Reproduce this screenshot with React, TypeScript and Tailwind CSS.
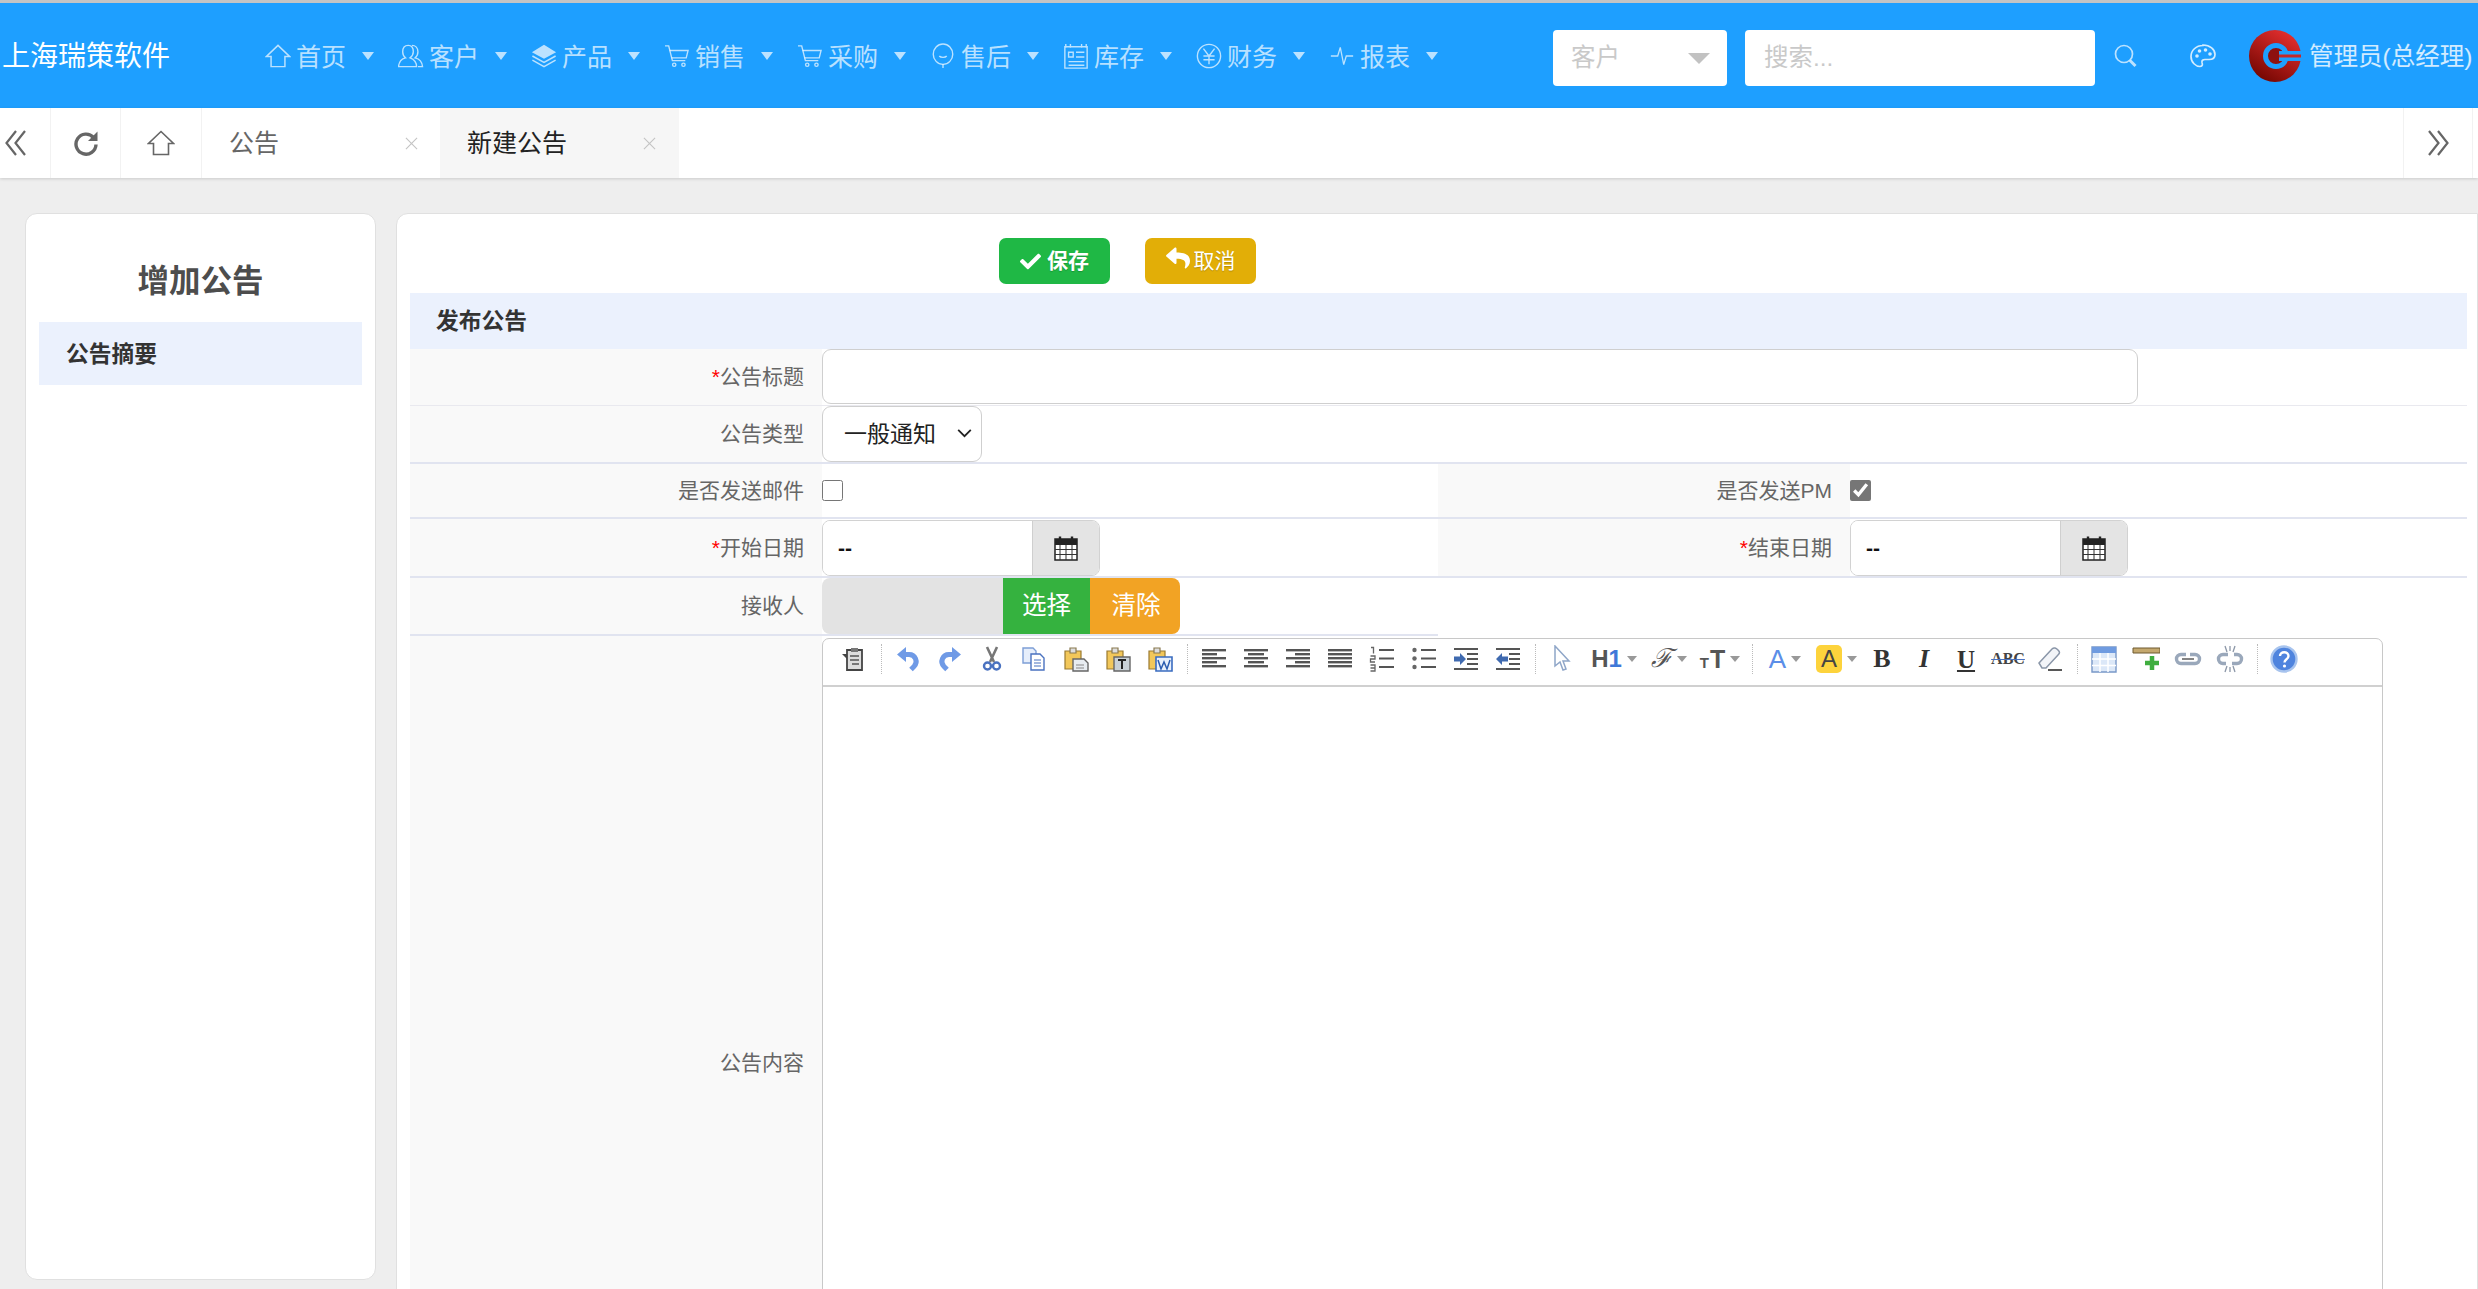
import type { ReactNode } from "react"
import { FaCheck, FaReply } from "react-icons/fa"

const sans = "font-['Liberation_Sans','Noto_Sans_CJK_SC',sans-serif]"

function HomeIcon({ className }: { className?: string }) {
  return (
    <svg viewBox="0 0 28 26" className={className} fill="none" stroke="currentColor" strokeWidth="1.6">
      <path d="M14 1.5 26.5 13.5H21.5V24.5H6.5V13.5H1.5Z" />
    </svg>
  )
}

function UserIcon() {
  return (
    <svg viewBox="0 0 28 26" className="w-[26px] h-[24px]" fill="none" stroke="currentColor" strokeWidth="1.5">
      <path d="M11 1.5c-4 0-6 3-6 7 0 3 1 5 3 6.5-4 1-7 4-7.5 9.5H20c0-5-3-8-7-9.5 2-1.5 3.5-3.5 3.5-6.5 0-4-2-7-5.500-7Z" />
      <path d="M15 1.500c4 0 6.500 3 6.500 7 0 3-1 5-3 6.500 4 1 7.500 4 8 9.500h-5" />
    </svg>
  )
}

function LayersIcon() {
  return (
    <svg viewBox="0 0 28 26" className="w-[26px] h-[26px]" fill="none" stroke="currentColor" strokeWidth="1.6">
      <path d="M14 1 27 9 14 16 1 9Z" fill="currentColor" stroke="none" />
      <path d="M1.500 13 14 20 26.500 13M1.500 17.500 14 24.500 26.500 17.500" />
    </svg>
  )
}

function CartIcon() {
  return (
    <svg viewBox="0 0 28 26" className="w-[26px] h-[24px]" fill="none" stroke="currentColor" strokeWidth="1.5">
      <path d="M1 2h4l4 16h14" />
      <path d="M6 7h20l-2 8H8" />
      <circle cx="11" cy="22.500" r="1.800" />
      <circle cx="21" cy="22.500" r="1.800" />
    </svg>
  )
}

function BalloonIcon() {
  return (
    <svg viewBox="0 0 28 28" className="w-[26px] h-[26px]" fill="none" stroke="currentColor" strokeWidth="1.5">
      <ellipse cx="14" cy="12" rx="10.500" ry="11" />
      <path d="M10 14c1.500 2 6.500 2 8 0M14 23v4" />
    </svg>
  )
}

function NotebookIcon() {
  return (
    <svg viewBox="0 0 28 28" className="w-[26px] h-[26px]" fill="none" stroke="currentColor" strokeWidth="1.5">
      <path d="M2 4h24v23H2ZM3 1v4M8 1v4M20 1v4M25 1v4" />
      <path d="M6 10h5v5H6ZM14 10h9M14 15h9M6 20h17M6 24h17" />
    </svg>
  )
}

function YenIcon() {
  return (
    <svg viewBox="0 0 28 28" className="w-[26px] h-[26px]" fill="none" stroke="currentColor" strokeWidth="1.5">
      <circle cx="14" cy="14" r="12.500" />
      <path d="M8 6l6 8 6-8M8 14h12M8 18h12M14 14v9" />
    </svg>
  )
}

function PulseIcon() {
  return (
    <svg viewBox="0 0 28 26" className="w-[24px] h-[24px]" fill="none" stroke="currentColor" strokeWidth="1.500">
      <path d="M1 13h8l3-10 4 20 3-10h8" />
    </svg>
  )
}

function Avatar() {
  return (
    <svg viewBox="0 0 52 52" className="w-[52px] h-[52px] shrink-0">
      <defs>
        <linearGradient id="av" x1="0.800" y1="0" x2="0.200" y2="1">
          <stop offset="0" stopColor="#e83030" />
          <stop offset="1" stopColor="#6f0500" />
        </linearGradient>
      </defs>
      <circle cx="26" cy="26" r="26" fill="url(#av)" />
      <circle cx="27" cy="26" r="10.500" fill="#8e1010" stroke="#1e9fff" strokeWidth="5" />
      <path d="M30 21h22v10H30Z" fill="#1e9fff" />
      <path d="M30 24.500h22v3H30Z" fill="#c62828" />
    </svg>
  )
}

function DoubleChevron({ left }: { left?: boolean }) {
  return (
    <svg viewBox="0 0 24 26" className="w-[24px] h-[26px]" fill="none" stroke="#666" strokeWidth="2.200">
      <path d={left ? "M12 1 2.500 13 12 25M21 1 11.500 13 21 25" : "M3 1 12.500 13 3 25M12 1 21.500 13 12 25"} />
    </svg>
  )
}

function RefreshIcon() {
  return (
    <svg viewBox="0 0 26 26" className="w-[26px] h-[26px]" fill="none">
      <path d="M20.500 7.500A10 10 0 1 0 23 14.500" stroke="#666" strokeWidth="3.400" />
      <path d="M24.500 1.500V11H15Z" fill="#666" />
    </svg>
  )
}

function TabClose() {
  return (
    <svg viewBox="0 0 14 14" className="w-[13px] h-[13px]" stroke="#c4c4c4" strokeWidth="1.200">
      <path d="M1 1l12 12M13 1 1 13" />
    </svg>
  )
}

function CalendarIcon() {
  return (
    <svg viewBox="0 0 24 26" className="w-[24px] h-[26px]" fill="none">
      <path d="M1 4h22v21H1Z" fill="#fff" stroke="#222" strokeWidth="1.500" />
      <path d="M1 4h22v6H1Z" fill="#222" />
      <path d="M6 1.500v6M18 1.500v6" stroke="#222" strokeWidth="2.400" />
      <path d="M6 10v15M12 10v15M18 10v15M1 14.500h22M1 19.500h22" stroke="#333" strokeWidth="1" />
    </svg>
  )
}

function NavItem({ icon, label }: { icon: ReactNode; label: string }) {
  return (
    <div className="w-[133px] shrink-0 flex items-center text-white/70">
      <div className="w-[26px] flex justify-center">{icon}</div>
      <span className="ml-[5px] pt-[3px] text-[25px] leading-none">{label}</span>
      <span className="ml-[16px] border-x-[6px] border-t-[8px] border-x-transparent border-t-white/70" />
    </div>
  )
}

function Row({ label, star, children, border = "border-b-2 border-[#e1e4f0]" }: { label: string; star?: boolean; children: ReactNode; border?: string }) {
  return (
    <div className={"flex " + border}>
      <RowLabel label={label} star={star} />
      <div className="flex-1 flex items-center">{children}</div>
    </div>
  )
}

function RowLabel({ label, star, className = "w-[412px]" }: { label: string; star?: boolean; className?: string }) {
  return (
    <div className={"shrink-0 bg-[#f9f9f9] flex items-center justify-end pr-[18px] text-[21px] text-[#666] " + className}>
      {star && <span className="text-[#f00]">*</span>}
      {label}
    </div>
  )
}

function DateInput() {
  return (
    <div className="w-[278px] h-[56px] flex border border-[#d2d2d2] rounded-[8px] overflow-hidden">
      <div className="flex-1 bg-white flex items-center pl-[15px] text-[21px] font-bold text-[#111]">--</div>
      <div className="w-[67px] bg-[#e4e4e4] border-l border-[#cfcfcf] flex items-center justify-center">
        <CalendarIcon />
      </div>
    </div>
  )
}

// one toolbar slot, 42px wide unless told otherwise
function Btn({ children, w = "w-[42px]" }: { children: ReactNode; w?: string }) {
  return <div className={"h-[42px] flex items-center justify-center shrink-0 " + w}>{children}</div>
}

function Sep() {
  return (
    <div className="w-[12px] h-[30px] flex justify-center shrink-0">
      <div className="border-l border-dotted border-[#bbb]" />
    </div>
  )
}

function Drop() {
  return <span className="ml-[5px] border-x-[5px] border-t-[6px] border-x-transparent border-t-[#999]" />
}

function Ico({ children }: { children: ReactNode }) {
  return (
    <svg viewBox="0 0 28 28" className="w-[28px] h-[28px]" fill="none">
      {children}
    </svg>
  )
}

function ClipBase() {
  return (
    <>
      <path d="M3 6h16v18H3Z" fill="#f2c75a" stroke="#9a7a30" strokeWidth="1.200" />
      <path d="M8 3h6v5H8Z" fill="#ddd" stroke="#8a7a50" strokeWidth="1.200" />
    </>
  )
}

function Lines({ rows }: { rows: [number, number][] }) {
  return (
    <Ico>
      {rows.map(([x, w], i) => (
        <rect key={i} x={x} y={4 + i * 4} width={w} height="2.400" fill="#555" />
      ))}
    </Ico>
  )
}

function Toolbar() {
  return (
    <div className="h-[48px] pl-[10px] pb-[6px] flex items-center border-b-2 border-[#d0d0d0]">
      <Btn>
        <Ico>
          <path d="M7 5h15v20H7Z" fill="#ddd" stroke="#444" strokeWidth="1.800" />
          <path d="M11 3h7v4h-7Z" fill="#777" />
          <path d="M10 11h9M10 15h9M12 19h7" stroke="#555" strokeWidth="1.400" />
          <path d="M2 9l5 0v5Z" fill="#444" />
        </Ico>
      </Btn>
      <Sep />
      <Btn>
        <Ico>
          <path d="M10 9.500h5a7 7 0 0 1 5 12l-3 3" stroke="#6f9ae6" strokeWidth="5" />
          <path d="M3 9.500 12 2V17Z" fill="#6f9ae6" />
        </Ico>
      </Btn>
      <Btn>
        <Ico>
          <path d="M18 9.500h-5a7 7 0 0 0-5 12l3 3" stroke="#6f9ae6" strokeWidth="5" />
          <path d="M25 9.500 16 2V17Z" fill="#6f9ae6" />
        </Ico>
      </Btn>
      <Btn>
        <Ico>
          <path d="M9 2l7 15M19 2l-7 15" stroke="#777" strokeWidth="2.600" />
          <circle cx="9.500" cy="21" r="3.500" stroke="#4a72c0" strokeWidth="2.400" />
          <circle cx="18.500" cy="21" r="3.500" stroke="#4a72c0" strokeWidth="2.400" />
        </Ico>
      </Btn>
      <Btn>
        <Ico>
          <path d="M3 3h10l3 3v12H3Z" fill="#e6eefb" stroke="#7d9ed6" strokeWidth="1.400" />
          <path d="M11 9h9l4 4v12H11Z" fill="#fff" stroke="#4a72c0" strokeWidth="1.400" />
          <path d="M14 15h7M14 18h7M14 21h7" stroke="#4a72c0" strokeWidth="1.200" />
        </Ico>
      </Btn>
      <Btn>
        <Ico>
          <ClipBase />
          <path d="M11 14h11l4 4v8H11Z" fill="#e8edf2" stroke="#666" strokeWidth="1.400" />
          <path d="M14 20h8M14 23h8" stroke="#888" strokeWidth="1.200" />
        </Ico>
      </Btn>
      <Btn>
        <Ico>
          <ClipBase />
          <path d="M10 12h16v14H10Z" fill="#c8d0d6" stroke="#666" strokeWidth="1.400" />
          <path d="M14 15h8M18 15v9" stroke="#222" strokeWidth="2" />
        </Ico>
      </Btn>
      <Btn>
        <Ico>
          <ClipBase />
          <path d="M10 12h16v14H10Z" fill="#e8f0fc" stroke="#3a6cc0" strokeWidth="1.600" />
          <path d="M12 15l3 9 3-7 3 7 3-9" stroke="#2a5cb0" strokeWidth="1.500" />
        </Ico>
      </Btn>
      <Sep />
      <Btn><Lines rows={[[2, 24], [2, 15], [2, 24], [2, 15], [2, 24]]} /></Btn>
      <Btn><Lines rows={[[2, 24], [6, 16], [2, 24], [6, 16], [2, 24]]} /></Btn>
      <Btn><Lines rows={[[2, 24], [11, 15], [2, 24], [11, 15], [2, 24]]} /></Btn>
      <Btn><Lines rows={[[2, 24], [2, 24], [2, 24], [2, 24], [2, 24]]} /></Btn>
      <Btn>
        <Ico>
          <path d="M11 5h15M11 13.500h15M11 22h15" stroke="#555" strokeWidth="2.200" />
          <path d="M3 2.500h2.500v6M2.500 11h4.500v3h-4.500v3h4.500M2.500 20h4.500v3h-4.500M7 23v3h-4.500" stroke="#666" strokeWidth="1.300" />
        </Ico>
      </Btn>
      <Btn>
        <Ico>
          <path d="M11 5h15M11 13.500h15M11 22h15" stroke="#555" strokeWidth="2.200" />
          <circle cx="4.500" cy="5" r="2.200" fill="#666" />
          <circle cx="4.500" cy="13.500" r="2.200" fill="#666" />
          <circle cx="4.500" cy="22" r="2.200" fill="#666" />
        </Ico>
      </Btn>
      <Btn>
        <Ico>
          <path d="M2 4h24M15 9h11M15 14h11M15 19h11M2 24h24" stroke="#555" strokeWidth="2.200" />
          <path d="M2 11.500h6V8l6 6-6 6v-3.500H2Z" fill="#3f6ab0" />
        </Ico>
      </Btn>
      <Btn>
        <Ico>
          <path d="M2 4h24M15 9h11M15 14h11M15 19h11M2 24h24" stroke="#555" strokeWidth="2.200" />
          <path d="M14 11.500H8V8l-6 6 6 6v-3.500h6Z" fill="#3f6ab0" />
        </Ico>
      </Btn>
      <Sep />
      <Btn>
        <Ico>
          <path d="M7 1v20l5-4 3 8 3-1-3-8h6Z" fill="#fff" stroke="#8fa6c8" strokeWidth="1.500" />
        </Ico>
      </Btn>
      <Btn w="w-[60px]">
        <span className="text-[24px] leading-none font-bold font-['Liberation_Sans',sans-serif] text-[#555] pl-[2px]">H<span className="text-[#3f78d8]">1</span></span>
        <Drop />
      </Btn>
      <Btn w="w-[51px]">
        <span className="text-[26px] leading-none italic font-['Liberation_Serif',serif] text-[#555]">ℱ</span>
        <Drop />
      </Btn>
      <Btn w="w-[52px]">
        <span className="font-['Liberation_Sans',sans-serif] font-bold text-[#555] leading-none"><span className="text-[15px]">T</span><span className="text-[25px] ml-[1px]">T</span></span>
        <Drop />
      </Btn>
      <Sep />
      <Btn w="w-[48px] pl-[6px]">
        <span className="text-[26px] leading-none font-['Liberation_Sans',sans-serif] text-[#5b8ee8]">A</span>
        <Drop />
      </Btn>
      <Btn w="w-[55px] pl-[6px]">
        <span className="w-[26px] h-[28px] rounded-[5px] bg-[#fdd33c] flex items-center justify-center text-[24px] leading-none font-['Liberation_Sans',sans-serif] text-[#444]">A</span>
        <Drop />
      </Btn>
      <Btn><span className="text-[26px] leading-none font-bold font-['Liberation_Serif',serif] text-[#333]">B</span></Btn>
      <Btn><span className="text-[26px] leading-none font-bold italic font-['Liberation_Serif',serif] text-[#333]">I</span></Btn>
      <Btn><span className="text-[25px] leading-none font-bold underline font-['Liberation_Serif',serif] text-[#333]">U</span></Btn>
      <Btn><span className="text-[16px] leading-none font-bold line-through decoration-[#4a72c0] font-['Liberation_Serif',serif] text-[#444]">ABC</span></Btn>
      <Btn>
        <Ico>
          <path d="M3 18 16 4c2-2 4-1 6 1s2 3 0 5L10 23H6Z" fill="#f2f4f8" stroke="#8a96a8" strokeWidth="1.500" />
          <path d="M12 25h14" stroke="#444" strokeWidth="1.800" />
        </Ico>
      </Btn>
      <Sep />
      <Btn>
        <Ico>
          <path d="M2 2h24v25H2Z" fill="#dce8f8" stroke="#7898c8" strokeWidth="1.400" />
          <path d="M2 2h24v6H2Z" fill="#6f9be0" />
          <path d="M10 8v19M18 8v19M2 14h24M2 20.500h24" stroke="#fff" strokeWidth="1.500" />
        </Ico>
      </Btn>
      <Btn>
        <Ico>
          <path d="M1 3h27v5H1Z" fill="#c4a86e" stroke="#6e5a30" strokeWidth="1" />
          <path d="M20 11v14M13 18h14" stroke="#3fae3f" strokeWidth="4.500" />
        </Ico>
      </Btn>
      <Btn>
        <Ico>
          <path d="M12 9.500H7a4.500 4.500 0 0 0 0 9h14a4.500 4.500 0 0 0 0-9h-5" stroke="#9aa8bb" strokeWidth="3.400" />
          <path d="M8 14h12" stroke="#666" strokeWidth="1.600" />
        </Ico>
      </Btn>
      <Btn>
        <Ico>
          <path d="M12 9.500H7a4.500 4.500 0 0 0 0 9h3M16 18.500h5a4.500 4.500 0 0 0 0-9h-3" stroke="#9aa8bb" strokeWidth="3.400" />
          <path d="M9 1l2 6M19 1l-2 6M14 1v5M9 27l2-6M19 27l-2-6M14 27v-5" stroke="#8c97a8" strokeWidth="1.300" />
        </Ico>
      </Btn>
      <Sep />
      <Btn>
        <svg viewBox="0 0 28 28" className="w-[28px] h-[28px]">
          <circle cx="14" cy="14" r="12.500" fill="#4f84de" stroke="#a8c4ee" strokeWidth="2.400" />
          <path d="M10 11c0-5 8.500-5 8.500 0 0 3.500-4 3-4 6.500" fill="none" stroke="#fff" strokeWidth="2.400" />
          <circle cx="14.500" cy="21" r="1.600" fill="#fff" />
        </svg>
      </Btn>
    </div>
  )
}

export default function App() {
  return (
    <div className={"w-full h-[1289px] overflow-hidden bg-[#eeeeee] flex flex-col " + sans}>
      <div className="h-[3px] bg-[#c4c4c4] shrink-0" />
      <header className="h-[105px] shrink-0 bg-[#1e9fff] flex items-center">
        <div className="w-[265px] shrink-0 pl-[2px] pt-[2px] text-[28px] leading-none text-white">上海瑞策软件</div>
        <NavItem icon={<HomeIcon className="w-[26px] h-[24px]" />} label="首页" />
        <NavItem icon={<UserIcon />} label="客户" />
        <NavItem icon={<LayersIcon />} label="产品" />
        <NavItem icon={<CartIcon />} label="销售" />
        <NavItem icon={<CartIcon />} label="采购" />
        <NavItem icon={<BalloonIcon />} label="售后" />
        <NavItem icon={<NotebookIcon />} label="库存" />
        <NavItem icon={<YenIcon />} label="财务" />
        <NavItem icon={<PulseIcon />} label="报表" />
        <div className="ml-[91px] mt-[5px] w-[174px] h-[56px] shrink-0 bg-white rounded-[4px] flex items-center justify-between pl-[18px] pr-[17px]">
          <span className="text-[24.5px] text-[#c9c9c9]">客户</span>
          <span className="border-x-[11px] border-t-[11px] border-x-transparent border-t-[#c2c2c2]" />
        </div>
        <input placeholder="搜索..." className="ml-[18px] mt-[5px] w-[350px] h-[56px] shrink-0 bg-white rounded-[4px] pl-[19px] text-[24.5px] outline-none placeholder:text-[#c9c9c9]" />
        <div className="ml-[19px] w-[24px] shrink-0 text-white/70">
          <svg viewBox="0 0 24 24" className="w-[24px] h-[24px]" fill="none" stroke="currentColor" strokeWidth="1.700">
            <circle cx="10" cy="10" r="8.500" />
            <path d="M16 16.500l5.500 5.500" strokeWidth="3" />
          </svg>
        </div>
        <div className="ml-[52px] w-[24px] shrink-0 text-white/80">
          <svg viewBox="0 0 26 24" className="w-[26px] h-[24px]" fill="none" stroke="currentColor" strokeWidth="1.700">
            <path d="M13 1.500C6 1.500 1 6.500 1 12.500c0 6 5 10 9 10 3 0 2.500-2.500 2-4-.5-2 1-3 3-3h4c4 0 6-2 6-5 0-5-5-9.500-12-9.500Z" />
            <circle cx="7" cy="12" r="1.800" fill="currentColor" stroke="none" />
            <circle cx="9.500" cy="7" r="1.800" fill="currentColor" stroke="none" />
            <circle cx="15.500" cy="6" r="1.800" fill="currentColor" stroke="none" />
            <circle cx="20" cy="10" r="1.800" fill="currentColor" stroke="none" />
          </svg>
        </div>
        <div className="ml-[35px] shrink-0"><Avatar /></div>
        <span className="ml-[8px] pt-[3px] text-[24.5px] leading-none whitespace-nowrap text-white/80">管理员(总经理)</span>
      </header>

      <nav className="h-[70px] shrink-0 bg-white flex shadow-[0_1px_3px_rgba(0,0,0,0.15)] relative">
        <div className="w-[51px] flex items-center pl-[4px] border-r border-[#f2f2f2]"><DoubleChevron left /></div>
        <div className="w-[70px] flex items-center justify-center border-r border-[#f2f2f2]"><RefreshIcon /></div>
        <div className="w-[81px] flex items-center justify-center border-r border-[#f2f2f2] text-[#666]"><HomeIcon className="w-[28px] h-[26px]" /></div>
        <div className="w-[238px] flex items-center justify-between pl-[27px] pr-[22px] pt-[1px] text-[25px] text-[#666]">
          公告
          <TabClose />
        </div>
        <div className="w-[239px] flex items-center justify-between pl-[27px] pr-[23px] pt-[1px] text-[25px] text-[#222] bg-[#f6f6f6]">
          新建公告
          <TabClose />
        </div>
        <div className="flex-1" />
        <div className="w-[70px] flex items-center justify-center border-x border-[#f2f2f2]"><DoubleChevron /></div>
        <div className="w-[5px]" />
      </nav>

      <main className="flex-1 min-h-0 flex gap-[20px] pl-[25px] pt-[35px] overflow-hidden">
        <aside className="w-[351px] h-[1067px] shrink-0 bg-white border border-[#e0e0e0] rounded-[12px] px-[13px]">
          <h2 className="h-[108px] pt-[28px] flex items-center justify-center text-[31.5px] font-bold text-[#4d4d4d]">增加公告</h2>
          <div className="h-[63px] bg-[#ebf1fd] flex items-center pl-[27px] pt-[2px] text-[22.75px] font-bold text-[#333]">公告摘要</div>
        </aside>

        <section className="flex-1 min-w-0 h-[1300px] bg-white border border-[#e0e0e0] rounded-tl-[12px] pl-[13px] pr-[10px]">
          <div className="h-[79px] pt-[24px] pl-[589px] flex gap-[35px]">
            <button className="w-[111px] h-[46px] rounded-[7px] bg-[#1fb845] text-white text-[21px] font-bold flex items-center justify-center gap-[6px] [text-shadow:0_1px_1px_rgba(0,0,0,0.2)]">
              <FaCheck className="w-[21px] h-[21px]" />
              保存
            </button>
            <button className="w-[111px] h-[46px] rounded-[7px] bg-[#e2ae07] text-white text-[21px] flex items-center justify-center gap-[4px] [text-shadow:0_1px_1px_rgba(0,0,0,0.2)]">
              <FaReply className="w-[24px] h-[24px] -mt-[6px]" />
              取消
            </button>
          </div>
          <div className="h-[56px] bg-[#ebf1fd] flex items-center pl-[26px] pt-[1px] text-[22.75px] font-bold text-[#333]">发布公告</div>

          <Row label="公告标题" star border="border-b border-[#e9e9ef] h-[57px]">
            <div className="w-[1316px] h-[55px] bg-white border border-[#cfcfcf] rounded-[9px] self-start" />
          </Row>
          <Row label="公告类型" border="border-b-2 border-[#e1e4f0] h-[58px]">
            <div className="relative w-[160px] h-[56px]">
              <select defaultValue="一般通知" className="appearance-none w-full h-full bg-white border border-[#cfcfcf] rounded-[9px] pl-[21px] text-[23px] text-[#222] outline-none">
                <option>一般通知</option>
                <option>紧急通知</option>
              </select>
              <svg viewBox="0 0 16 10" className="absolute right-[10px] top-[23px] w-[15px] h-[9px] pointer-events-none" fill="none" stroke="#222" strokeWidth="2">
                <path d="M1 1l7 7 7-7" />
              </svg>
            </div>
          </Row>
          <div className="flex h-[55px] border-b-2 border-[#e1e4f0]">
            <RowLabel label="是否发送邮件" />
            <div className="w-[616px] flex items-center">
              <input type="checkbox" className="w-[21px] h-[21px] accent-[#767676]" />
            </div>
            <RowLabel label="是否发送PM" />
            <div className="flex-1 flex items-center">
              <input type="checkbox" defaultChecked className="w-[21px] h-[21px] accent-[#767676]" />
            </div>
          </div>
          <div className="flex h-[59px] border-b-2 border-[#e1e4f0]">
            <RowLabel label="开始日期" star />
            <div className="w-[616px] flex items-center"><DateInput /></div>
            <RowLabel label="结束日期" star />
            <div className="flex-1 flex items-center"><DateInput /></div>
          </div>
          <div className="w-[1028px] h-[58px] flex border-b-2 border-[#e1e4f0]">
            <RowLabel label="接收人" />
            <div className="flex items-center">
              <div className="w-[358px] h-[56px] flex rounded-[8px] overflow-hidden text-[24.5px] text-white">
                <div className="w-[181px] bg-[#e3e3e3]" />
                <div className="w-[87px] bg-[#35b23f] flex items-center justify-center">选择</div>
                <div className="w-[90px] bg-[#f2a324] flex items-center justify-center pl-[2px]">清除</div>
              </div>
            </div>
          </div>
          <div className="flex h-[854px]">
            <RowLabel label="公告内容" />
            <div className="w-[1561px] mt-[2px] bg-white border border-[#c8c8c8] rounded-t-[7px]">
              <Toolbar />
            </div>
          </div>
        </section>
      </main>
    </div>
  )
}
